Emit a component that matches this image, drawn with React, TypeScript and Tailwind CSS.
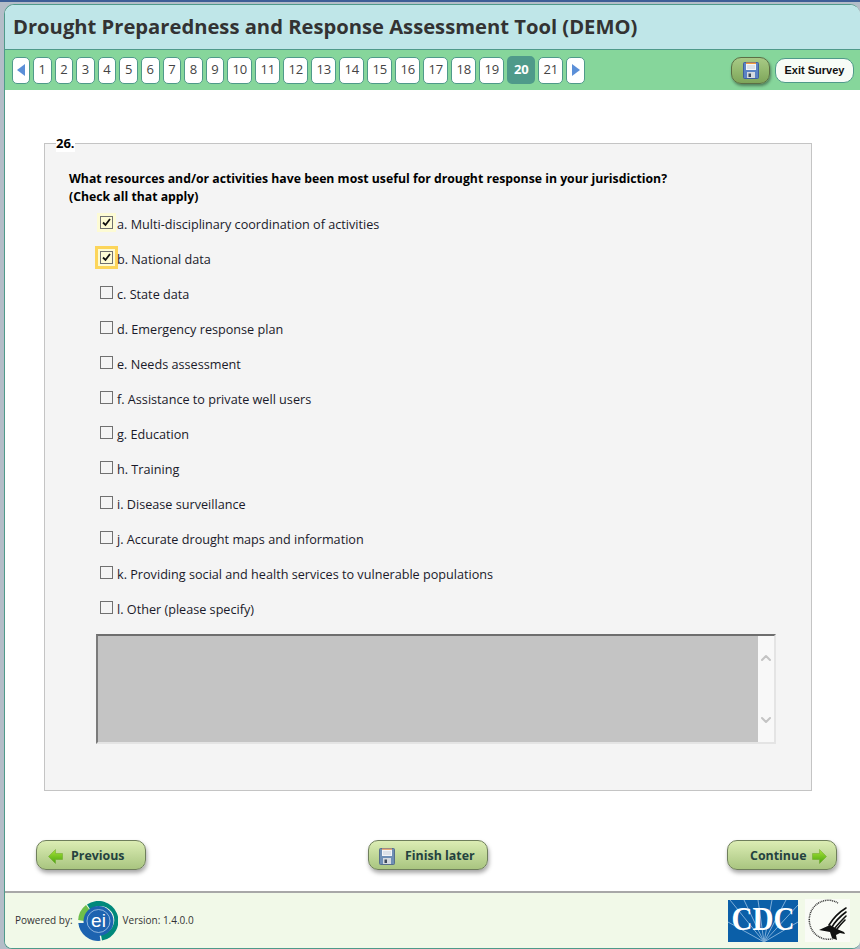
import { ChevronDown, ChevronUp } from "lucide-react";

const pages = Array.from({ length: 21 }, (_, i) => i + 1);

const options = [
  "a. Multi-disciplinary coordination of activities",
  "b. National data",
  "c. State data",
  "d. Emergency response plan",
  "e. Needs assessment",
  "f. Assistance to private well users",
  "g. Education",
  "h. Training",
  "i. Disease surveillance",
  "j. Accurate drought maps and information",
  "k. Providing social and health services to vulnerable populations",
  "l. Other (please specify)",
];

function Floppy({ muted = false }: { muted?: boolean }) {
  return (
    <svg width="16" height="17" viewBox="0 0 16 17">
      <rect x="0.5" y="0.5" width="15" height="16" rx="1" fill={muted ? "#6f8fb5" : "#5b83c4"} stroke={muted ? "#566f8c" : "#3f5f9f"} />
      <rect x="3" y="0.5" width="10" height="1.6" fill={muted ? "#e8a878" : "#f59a3c"} />
      <rect x="3" y="2" width="10" height="6" fill="#f3f5f8" />
      <line x1="4" y1="4" x2="12" y2="4" stroke="#c5cdd8" />
      <line x1="4" y1="6" x2="12" y2="6" stroke="#c5cdd8" />
      <rect x="4" y="10" width="8" height="6" fill="#d5dae0" />
      <rect x="5.5" y="11.5" width="2.5" height="3.5" fill="#3d4a5c" />
    </svg>
  );
}

function GreenArrow({ flip = false }: { flip?: boolean }) {
  return (
    <svg width="15" height="15" viewBox="0 0 15 15" className={flip ? "-scale-x-100" : ""}>
      <defs>
        <linearGradient id="arrowFill" x1="0" y1="0" x2="0" y2="1">
          <stop offset="0" stopColor="#a8e436" />
          <stop offset="1" stopColor="#4aa510" />
        </linearGradient>
      </defs>
      <path d="M0.5 7.5 L7.5 0.5 V4.5 H14.5 V10.5 H7.5 V14.5 Z" fill="url(#arrowFill)" stroke="#6aa52a" strokeWidth="0.5" />
    </svg>
  );
}

function EiLogo() {
  return (
    <svg width="40" height="40" viewBox="0 0 40 40">
      <path d="M9 3.5 A20 20 0 1 1 24 39.6 L22.8 33 A14 14 0 1 0 12.5 9 Z" fill="#00897b" />
      <path d="M0.2 19 A20 20 0 0 1 8 4 L12 9.5 A14 14 0 0 0 6.2 20 Z" fill="#6fbf4a" />
      <path d="M0.3 22 A20 20 0 0 0 22.5 39.8 L21.5 33.5 A14 14 0 0 1 6.3 22 Z" fill="#1d63b0" />
      <circle cx="20.5" cy="20" r="15" fill="#1d63b0" />
      <circle cx="20.5" cy="20" r="11.5" fill="none" stroke="#a9c8ea" strokeWidth="0.8" />
      <text x="20.5" y="26" textAnchor="middle" fontSize="19" fill="#fff" fontFamily="'Liberation Sans', sans-serif">
        ei
      </text>
    </svg>
  );
}

function CdcLogo() {
  return (
    <svg width="70" height="42" viewBox="0 0 70 42">
      <rect width="70" height="42" fill="#0b5fa8" />
      <g stroke="#7eaed8" strokeWidth="1">
        <line x1="36" y1="42" x2="2" y2="0" />
        <line x1="36" y1="42" x2="16" y2="0" />
        <line x1="36" y1="42" x2="30" y2="0" />
        <line x1="36" y1="42" x2="44" y2="0" />
        <line x1="36" y1="42" x2="58" y2="0" />
        <line x1="36" y1="42" x2="70" y2="5" />
        <line x1="36" y1="42" x2="70" y2="22" />
        <line x1="36" y1="42" x2="0" y2="22" />
      </g>
      <text
        x="0"
        y="0"
        transform="translate(35 30) scale(1.04 1.2)"
        textAnchor="middle"
        fontSize="28"
        fontWeight="700"
        fill="#fff"
        fontFamily="'Liberation Serif', serif"
      >
        CDC
      </text>
    </svg>
  );
}

function HhsSeal() {
  return (
    <svg width="45" height="43" viewBox="0 0 45 43">
      <rect width="45" height="43" fill="#f9fbf6" />
      <path d="M33 4 A19 19.5 0 1 0 30 39" fill="none" stroke="#333" strokeWidth="1.5" strokeDasharray="1 0.8" />
      <g fill="none" stroke="#111" strokeWidth="1.6" strokeLinecap="round">
        <path d="M41 9 C36 12 29 18 24 26" />
        <path d="M41 13 C37 16 31 21 27 28" />
        <path d="M41 17 C38 20 34 24 30 29" />
        <path d="M40 21 C38 23 35 26 32 30" />
      </g>
      <path d="M14 31 L25 26 L32 30 L39 33 L40 35 L35 34 L31 36 L32 41 L27 39 L25 33 Z" fill="#111" />
    </svg>
  );
}

function ActionButton({ children, className }: { children: React.ReactNode; className: string }) {
  return (
    <button
      className={`flex h-[30px] shrink-0 items-center rounded-[10px] border border-[#6f7f5c] bg-gradient-to-b from-[#dcedb4] via-[#c2d99a] to-[#a9c580] pt-[2px] text-[12.4px] font-bold text-[#24423f] shadow-[1px_3px_4px_rgba(0,0,0,0.35)] ${className}`}
    >
      {children}
    </button>
  );
}

export default function App() {
  return (
    <div className="h-[949px] w-[860px] overflow-hidden bg-[#b4bdc8] pl-[4px] pt-[3px] font-['Open_Sans',sans-serif]">
      <div className="-ml-[4px] -mt-[3px] mb-[2px] h-[1px] border-t-2 border-[#3d5f96]" />
      <div className="flex h-[945px] flex-col overflow-hidden rounded-b-[8px] rounded-t-[10px] border border-r-0 border-[#4f9a8a] bg-white">
        <header className="flex h-[45px] shrink-0 items-center border-b border-[#4f9a8a] bg-[#bfe6e8] pb-[2px] pl-[8px]">
          <h1 className="text-[20.2px] font-bold text-[#333333]">Drought Preparedness and Response Assessment Tool (DEMO)</h1>
        </header>

        <nav className="flex h-[40px] shrink-0 items-center justify-between bg-[#86d69b] pl-[7px] pr-[6px]">
          <div className="flex items-center gap-[3px] text-[13px] text-[#444444]">
            <button className="flex h-[27px] w-[18px] items-center justify-center rounded-[5px] border border-[#4f9a8a] bg-white">
              <span className="h-0 w-0 border-y-[6.5px] border-r-[8px] border-y-transparent border-r-[#5b8fd8]" />
            </button>
            {pages.map((p) =>
              p === 20 ? (
                <button key={p} className="h-[28px] w-[28px] rounded-[5px] bg-[#4f9a8a] font-bold text-white">
                  {p}
                </button>
              ) : (
                <button
                  key={p}
                  className={`h-[27px] rounded-[5px] border border-[#4f9a8a] bg-white ${p < 10 ? "w-[18.6px]" : "w-[25px]"}`}
                >
                  {p}
                </button>
              )
            )}
            <button className="flex h-[27px] w-[19px] items-center justify-center rounded-[5px] border border-[#4f9a8a] bg-white">
              <span className="h-0 w-0 border-y-[6.5px] border-l-[8px] border-y-transparent border-l-[#5b8fd8]" />
            </button>
          </div>
          <div className="flex items-center gap-[5px]">
            <button className="flex h-[27px] w-[39px] items-center justify-center rounded-[10px] border border-[#5c6f45] bg-gradient-to-b from-[#a8c986] via-[#93b96f] to-[#7ea55a] shadow-[1px_2px_3px_rgba(0,0,0,0.4)]">
              <Floppy />
            </button>
            <button className="flex h-[25px] w-[79px] items-center justify-center rounded-[10px] border border-[#4f9a8a] bg-[#f7fcf6] font-['Liberation_Sans',sans-serif] text-[11px] font-bold text-[#111111]">
              Exit Survey
            </button>
          </div>
        </nav>

        <main className="flex min-h-0 flex-1 flex-col bg-white pl-[39px] pt-[44px]">
          <fieldset className="h-[657px] w-[768px] border border-[#c4c4c4] bg-[#f4f4f4] pl-[24px]">
            <legend className="-ml-[13px] bg-white text-[13px] font-bold leading-[18px] text-black">26.</legend>
            <p className="mt-[18px] text-[12.25px] font-bold leading-[18px] text-black">
              What resources and/or activities have been most useful for drought response in your jurisdiction?
              <br />
              (Check all that apply)
            </p>
            <ul className="ml-[27px] mt-[1px] flex flex-col">
              {options.map((o, i) => (
                <li key={o} className="isolate flex h-[35px] items-center text-[12.65px] text-[#1a1a2a]">
                  <span className="-mt-[4px] flex w-[21px] shrink-0 justify-center">
                    <span className="relative flex h-[13px] w-[13px] items-center justify-center border border-[#707070]">
                      {i === 0 && <span className="absolute -inset-[4px] -z-10 bg-[#fdfbd5]" />}
                      {i === 1 && <span className="absolute -inset-[6px] -z-10 border-[3px] border-[#fcd55a] bg-[#fdfbd5]" />}
                      {i < 2 && (
                        <svg width="11" height="11" viewBox="0 0 11 11">
                          <path d="M2 5.5 L4.5 8 L9 2" fill="none" stroke="#111" strokeWidth="1.8" />
                        </svg>
                      )}
                    </span>
                  </span>
                  <span className="whitespace-nowrap">{o}</span>
                </li>
              ))}
            </ul>
            <div className="ml-[27px] mt-[7px] flex h-[110px] w-[680px] border-2 border-[#e4e4e4] border-l-[#7a7a7a] border-t-[#6e6e6e]">
              <div className="flex-1 bg-[#c4c4c4]" />
              <div className="flex w-[16px] flex-col items-center justify-between bg-[#f8f8f8] py-[14px] text-[#c4c4c4]">
                <ChevronUp size={16} strokeWidth={3} />
                <ChevronDown size={16} strokeWidth={3} />
              </div>
            </div>
          </fieldset>

          <div className="-ml-[8px] mt-[49px] flex items-center">
            <ActionButton className="w-[110px] gap-[8px] pl-[11px]">
              <GreenArrow />
              Previous
            </ActionButton>
            <ActionButton className="ml-[222px] w-[120px] gap-[10px] pl-[10px]">
              <Floppy muted />
              Finish later
            </ActionButton>
            <ActionButton className="ml-[239px] w-[110px] gap-[6px] pl-[22px]">
              Continue
              <GreenArrow flip />
            </ActionButton>
          </div>
        </main>

        <footer className="flex h-[57px] shrink-0 items-center justify-between border-t-2 border-[#a8a8a8] bg-[#f1f9e8] pl-[10px] pr-[10px]">
          <div className="flex items-center gap-[5px] text-[10px] text-[#333333]">
            <span>Powered by:</span>
            <EiLogo />
            <span>Version: 1.4.0.0</span>
          </div>
          <div className="flex items-center gap-[7px]">
            <CdcLogo />
            <HhsSeal />
          </div>
        </footer>
      </div>
    </div>
  );
}
